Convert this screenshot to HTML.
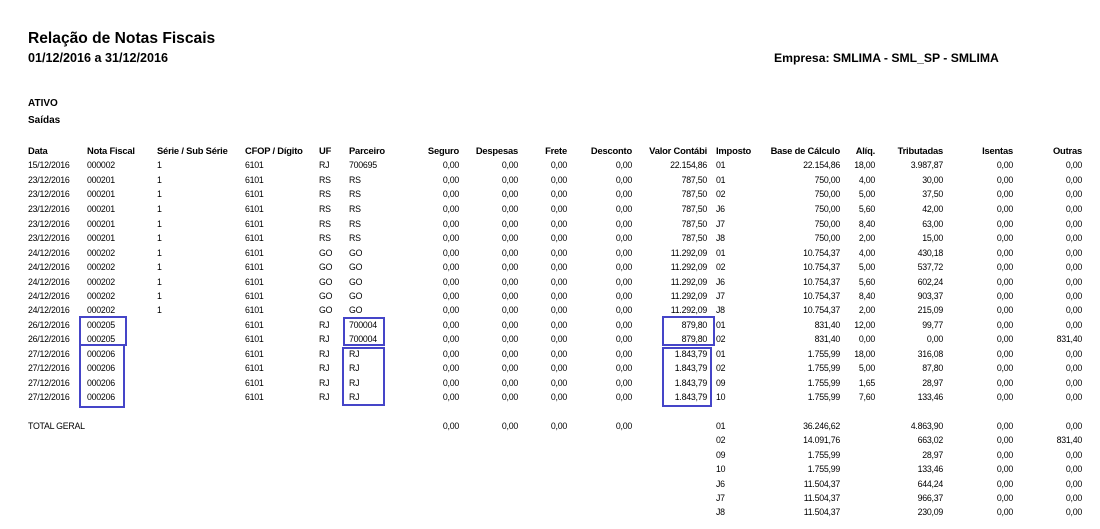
<!DOCTYPE html>
<html><head><meta charset="utf-8"><style>
body{margin:0;width:1100px;height:529px;background:#fff;position:relative;overflow:hidden;font-family:"Liberation Sans",sans-serif;color:#000}
.t{position:absolute;white-space:nowrap}
.r{position:absolute;left:0;width:1100px;height:12px;font-size:8.8px;line-height:12px;letter-spacing:-0.25px}
.r span{position:absolute;top:0;white-space:nowrap}
.hd{font-weight:bold;font-size:9.4px;letter-spacing:-0.2px}
.a{left:28px}.b{left:87px}.c{left:157px}.d{left:245px}.e{left:319px}.f{left:349px}
.g{left:399px;width:60px;text-align:right}.h{left:458px;width:60px;text-align:right}
.i{left:507px;width:60px;text-align:right}.j{left:572px;width:60px;text-align:right}
.k{left:637px;width:70px;text-align:right}.l{left:716px}
.m{left:760px;width:80px;text-align:right}.n{left:835px;width:40px;text-align:right}
.o{left:873px;width:70px;text-align:right}.p{left:943px;width:70px;text-align:right}
.q{left:1012px;width:70px;text-align:right}
.bx{position:absolute;border:2px solid #4545c8;box-sizing:border-box}
</style></head><body>
<div class="t" style="left:28px;top:30px;font-size:15.6px;font-weight:bold">Relação de Notas Fiscais</div>
<div class="t" style="left:28px;top:51px;font-size:12.6px;font-weight:bold">01/12/2016 a 31/12/2016</div>
<div class="t" style="left:774px;top:51px;font-size:12.2px;font-weight:bold">Empresa: SMLIMA - SML_SP - SMLIMA</div>
<div class="t" style="left:28px;top:98px;font-size:10px;font-weight:bold">ATIVO</div>
<div class="t" style="left:28px;top:115px;font-size:10px;font-weight:bold">Saídas</div>

<div class="r hd" style="top:145px"><span class="a">Data</span><span class="b">Nota Fiscal</span><span class="c">Série / Sub Série</span><span class="d">CFOP / Dígito</span><span class="e">UF</span><span class="f">Parceiro</span><span class="g">Seguro</span><span class="h">Despesas</span><span class="i">Frete</span><span class="j">Desconto</span><span class="k">Valor Contábi</span><span class="l">Imposto</span><span class="m">Base de Cálculo</span><span class="n">Alíq.</span><span class="o">Tributadas</span><span class="p">Isentas</span><span class="q">Outras</span></div>

<div class="r" style="top:159px"><span class="a">15/12/2016</span><span class="b">000002</span><span class="c">1</span><span class="d">6101</span><span class="e">RJ</span><span class="f">700695</span><span class="g">0,00</span><span class="h">0,00</span><span class="i">0,00</span><span class="j">0,00</span><span class="k">22.154,86</span><span class="l">01</span><span class="m">22.154,86</span><span class="n">18,00</span><span class="o">3.987,87</span><span class="p">0,00</span><span class="q">0,00</span></div>
<div class="r" style="top:174px"><span class="a">23/12/2016</span><span class="b">000201</span><span class="c">1</span><span class="d">6101</span><span class="e">RS</span><span class="f">RS</span><span class="g">0,00</span><span class="h">0,00</span><span class="i">0,00</span><span class="j">0,00</span><span class="k">787,50</span><span class="l">01</span><span class="m">750,00</span><span class="n">4,00</span><span class="o">30,00</span><span class="p">0,00</span><span class="q">0,00</span></div>
<div class="r" style="top:188px"><span class="a">23/12/2016</span><span class="b">000201</span><span class="c">1</span><span class="d">6101</span><span class="e">RS</span><span class="f">RS</span><span class="g">0,00</span><span class="h">0,00</span><span class="i">0,00</span><span class="j">0,00</span><span class="k">787,50</span><span class="l">02</span><span class="m">750,00</span><span class="n">5,00</span><span class="o">37,50</span><span class="p">0,00</span><span class="q">0,00</span></div>
<div class="r" style="top:203px"><span class="a">23/12/2016</span><span class="b">000201</span><span class="c">1</span><span class="d">6101</span><span class="e">RS</span><span class="f">RS</span><span class="g">0,00</span><span class="h">0,00</span><span class="i">0,00</span><span class="j">0,00</span><span class="k">787,50</span><span class="l">J6</span><span class="m">750,00</span><span class="n">5,60</span><span class="o">42,00</span><span class="p">0,00</span><span class="q">0,00</span></div>
<div class="r" style="top:218px"><span class="a">23/12/2016</span><span class="b">000201</span><span class="c">1</span><span class="d">6101</span><span class="e">RS</span><span class="f">RS</span><span class="g">0,00</span><span class="h">0,00</span><span class="i">0,00</span><span class="j">0,00</span><span class="k">787,50</span><span class="l">J7</span><span class="m">750,00</span><span class="n">8,40</span><span class="o">63,00</span><span class="p">0,00</span><span class="q">0,00</span></div>
<div class="r" style="top:232px"><span class="a">23/12/2016</span><span class="b">000201</span><span class="c">1</span><span class="d">6101</span><span class="e">RS</span><span class="f">RS</span><span class="g">0,00</span><span class="h">0,00</span><span class="i">0,00</span><span class="j">0,00</span><span class="k">787,50</span><span class="l">J8</span><span class="m">750,00</span><span class="n">2,00</span><span class="o">15,00</span><span class="p">0,00</span><span class="q">0,00</span></div>
<div class="r" style="top:247px"><span class="a">24/12/2016</span><span class="b">000202</span><span class="c">1</span><span class="d">6101</span><span class="e">GO</span><span class="f">GO</span><span class="g">0,00</span><span class="h">0,00</span><span class="i">0,00</span><span class="j">0,00</span><span class="k">11.292,09</span><span class="l">01</span><span class="m">10.754,37</span><span class="n">4,00</span><span class="o">430,18</span><span class="p">0,00</span><span class="q">0,00</span></div>
<div class="r" style="top:261px"><span class="a">24/12/2016</span><span class="b">000202</span><span class="c">1</span><span class="d">6101</span><span class="e">GO</span><span class="f">GO</span><span class="g">0,00</span><span class="h">0,00</span><span class="i">0,00</span><span class="j">0,00</span><span class="k">11.292,09</span><span class="l">02</span><span class="m">10.754,37</span><span class="n">5,00</span><span class="o">537,72</span><span class="p">0,00</span><span class="q">0,00</span></div>
<div class="r" style="top:276px"><span class="a">24/12/2016</span><span class="b">000202</span><span class="c">1</span><span class="d">6101</span><span class="e">GO</span><span class="f">GO</span><span class="g">0,00</span><span class="h">0,00</span><span class="i">0,00</span><span class="j">0,00</span><span class="k">11.292,09</span><span class="l">J6</span><span class="m">10.754,37</span><span class="n">5,60</span><span class="o">602,24</span><span class="p">0,00</span><span class="q">0,00</span></div>
<div class="r" style="top:290px"><span class="a">24/12/2016</span><span class="b">000202</span><span class="c">1</span><span class="d">6101</span><span class="e">GO</span><span class="f">GO</span><span class="g">0,00</span><span class="h">0,00</span><span class="i">0,00</span><span class="j">0,00</span><span class="k">11.292,09</span><span class="l">J7</span><span class="m">10.754,37</span><span class="n">8,40</span><span class="o">903,37</span><span class="p">0,00</span><span class="q">0,00</span></div>
<div class="r" style="top:304px"><span class="a">24/12/2016</span><span class="b">000202</span><span class="c">1</span><span class="d">6101</span><span class="e">GO</span><span class="f">GO</span><span class="g">0,00</span><span class="h">0,00</span><span class="i">0,00</span><span class="j">0,00</span><span class="k">11.292,09</span><span class="l">J8</span><span class="m">10.754,37</span><span class="n">2,00</span><span class="o">215,09</span><span class="p">0,00</span><span class="q">0,00</span></div>
<div class="r" style="top:319px"><span class="a">26/12/2016</span><span class="b">000205</span><span class="d">6101</span><span class="e">RJ</span><span class="f">700004</span><span class="g">0,00</span><span class="h">0,00</span><span class="i">0,00</span><span class="j">0,00</span><span class="k">879,80</span><span class="l">01</span><span class="m">831,40</span><span class="n">12,00</span><span class="o">99,77</span><span class="p">0,00</span><span class="q">0,00</span></div>
<div class="r" style="top:333px"><span class="a">26/12/2016</span><span class="b">000205</span><span class="d">6101</span><span class="e">RJ</span><span class="f">700004</span><span class="g">0,00</span><span class="h">0,00</span><span class="i">0,00</span><span class="j">0,00</span><span class="k">879,80</span><span class="l">02</span><span class="m">831,40</span><span class="n">0,00</span><span class="o">0,00</span><span class="p">0,00</span><span class="q">831,40</span></div>
<div class="r" style="top:348px"><span class="a">27/12/2016</span><span class="b">000206</span><span class="d">6101</span><span class="e">RJ</span><span class="f">RJ</span><span class="g">0,00</span><span class="h">0,00</span><span class="i">0,00</span><span class="j">0,00</span><span class="k">1.843,79</span><span class="l">01</span><span class="m">1.755,99</span><span class="n">18,00</span><span class="o">316,08</span><span class="p">0,00</span><span class="q">0,00</span></div>
<div class="r" style="top:362px"><span class="a">27/12/2016</span><span class="b">000206</span><span class="d">6101</span><span class="e">RJ</span><span class="f">RJ</span><span class="g">0,00</span><span class="h">0,00</span><span class="i">0,00</span><span class="j">0,00</span><span class="k">1.843,79</span><span class="l">02</span><span class="m">1.755,99</span><span class="n">5,00</span><span class="o">87,80</span><span class="p">0,00</span><span class="q">0,00</span></div>
<div class="r" style="top:377px"><span class="a">27/12/2016</span><span class="b">000206</span><span class="d">6101</span><span class="e">RJ</span><span class="f">RJ</span><span class="g">0,00</span><span class="h">0,00</span><span class="i">0,00</span><span class="j">0,00</span><span class="k">1.843,79</span><span class="l">09</span><span class="m">1.755,99</span><span class="n">1,65</span><span class="o">28,97</span><span class="p">0,00</span><span class="q">0,00</span></div>
<div class="r" style="top:391px"><span class="a">27/12/2016</span><span class="b">000206</span><span class="d">6101</span><span class="e">RJ</span><span class="f">RJ</span><span class="g">0,00</span><span class="h">0,00</span><span class="i">0,00</span><span class="j">0,00</span><span class="k">1.843,79</span><span class="l">10</span><span class="m">1.755,99</span><span class="n">7,60</span><span class="o">133,46</span><span class="p">0,00</span><span class="q">0,00</span></div>

<div class="r" style="top:420px"><span class="a">TOTAL GERAL</span><span class="g">0,00</span><span class="h">0,00</span><span class="i">0,00</span><span class="j">0,00</span><span class="l">01</span><span class="m">36.246,62</span><span class="o">4.863,90</span><span class="p">0,00</span><span class="q">0,00</span></div>
<div class="r" style="top:434px"><span class="l">02</span><span class="m">14.091,76</span><span class="o">663,02</span><span class="p">0,00</span><span class="q">831,40</span></div>
<div class="r" style="top:449px"><span class="l">09</span><span class="m">1.755,99</span><span class="o">28,97</span><span class="p">0,00</span><span class="q">0,00</span></div>
<div class="r" style="top:463px"><span class="l">10</span><span class="m">1.755,99</span><span class="o">133,46</span><span class="p">0,00</span><span class="q">0,00</span></div>
<div class="r" style="top:478px"><span class="l">J6</span><span class="m">11.504,37</span><span class="o">644,24</span><span class="p">0,00</span><span class="q">0,00</span></div>
<div class="r" style="top:492px"><span class="l">J7</span><span class="m">11.504,37</span><span class="o">966,37</span><span class="p">0,00</span><span class="q">0,00</span></div>
<div class="r" style="top:506px"><span class="l">J8</span><span class="m">11.504,37</span><span class="o">230,09</span><span class="p">0,00</span><span class="q">0,00</span></div>

<div class="bx" style="left:79px;top:316px;width:48px;height:30px"></div>
<div class="bx" style="left:79px;top:344px;width:46px;height:64px"></div>
<div class="bx" style="left:343px;top:317px;width:42px;height:29px"></div>
<div class="bx" style="left:342px;top:347px;width:43px;height:59px"></div>
<div class="bx" style="left:662px;top:316px;width:53px;height:30px"></div>
<div class="bx" style="left:662px;top:347px;width:50px;height:60px"></div>
</body></html>
